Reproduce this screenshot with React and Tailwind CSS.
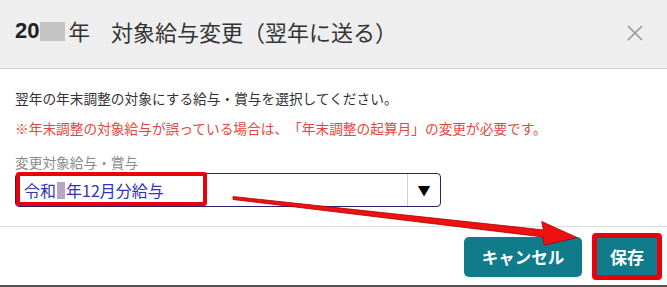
import React from "react";

export default function App() {
  const jp = { fontFamily: '"Noto Sans CJK JP", "Noto Sans", sans-serif' };
  return (
    <div className="relative w-[667px] h-[287px] bg-white overflow-hidden [text-spacing-trim:space-all]" style={jp}>
      {/* Header */}
      <div className="h-[69px] bg-[#eeeeee] border-b border-[#cfcfcf] flex items-start pl-[15px] pr-[24px] pt-[15px]">
        <div className="flex items-center h-[32px] text-[21.5px] text-[#333] leading-none">
          <span className="font-semibold text-[#222] text-[22px]" style={{ fontFamily: '"Liberation Sans", Arial, sans-serif' }}>20</span>
          <span className="inline-block w-[25px] h-[19px] bg-[#c4c4c4] ml-[1px] mr-[3px]" />
          <span>年</span>
          <span className="ml-[21px] text-[22px]">対象給与変更（翌年に送る）</span>
        </div>
        <div className="ml-auto mt-[10px]">
          <svg width="16" height="16" viewBox="0 0 16 16">
            <path d="M1 1 L15 15 M15 1 L1 15" stroke="#9a9a9a" strokeWidth="1.7" fill="none" />
          </svg>
        </div>
      </div>

      {/* Body */}
      <div className="pl-[15px] pr-[15px] pt-[14px] pb-[19px] border-b border-[#dedede]">
        <div className="text-[13.7px] leading-[30px] text-[#333]">
          翌年の年末調整の対象にする給与・賞与を選択してください。
        </div>
        <div className="text-[13.7px] leading-[30px] text-[#e2473d]">
          ※年末調整の対象給与が誤っている場合は、「年末調整の起算月」の変更が必要です。
        </div>
        <div className="mt-[9px] text-[13.7px] leading-[20px] text-[#8a8a8a]">
          変更対象給与・賞与
        </div>
        <div className="mt-[1px] w-[426px] h-[34px] border border-[#23236e] rounded-[4px] flex items-stretch">
          <div className="flex-1 flex items-center pl-[8px]">
            <span className="text-[16px] text-[#3434b4] flex items-center">
              令和<span className="inline-block w-[8px] h-[17px] bg-[#b8a6c4] mx-[1px]" />年12月分給与
            </span>
          </div>
          <div className="w-[33px] border-l border-[#cfcfcf] flex items-center justify-center text-[13px] text-black">
            ▼
          </div>
        </div>
      </div>

      {/* Footer */}
      <div className="h-[60px] border-b-2 border-[#555] flex items-start justify-end pr-[5px] pt-[6px] gap-[10px]">
        <button className="mt-[4px] w-[118px] h-[40px] rounded-[5px] bg-[#107c8b] text-white font-bold text-[16.5px] leading-none">
          キャンセル
        </button>
        <button className="w-[70px] h-[47px] rounded-[4px] border-[5px] border-[#e8000b] bg-[#107c8b] text-white font-bold text-[17px] leading-none">
          保存
        </button>
      </div>

      {/* Annotation: red frame around selected value */}
      <div className="absolute left-[16px] top-[172px] w-[191px] h-[34px] border-[4px] border-[#e8000b] rounded-[3px] pointer-events-none" />

      {/* Annotation: arrow */}
      <svg className="absolute left-0 top-0 pointer-events-none" width="667" height="287" viewBox="0 0 667 287">
        <polygon
          points="233,196.5 543.4,229.9 541.7,221.5 577,237.5 544.3,245.3 542.6,236.9 233,199.5"
          fill="#ee1111"
          stroke="#a80000"
          strokeWidth="0.8"
          strokeLinejoin="round"
        />
      </svg>
    </div>
  );
}
